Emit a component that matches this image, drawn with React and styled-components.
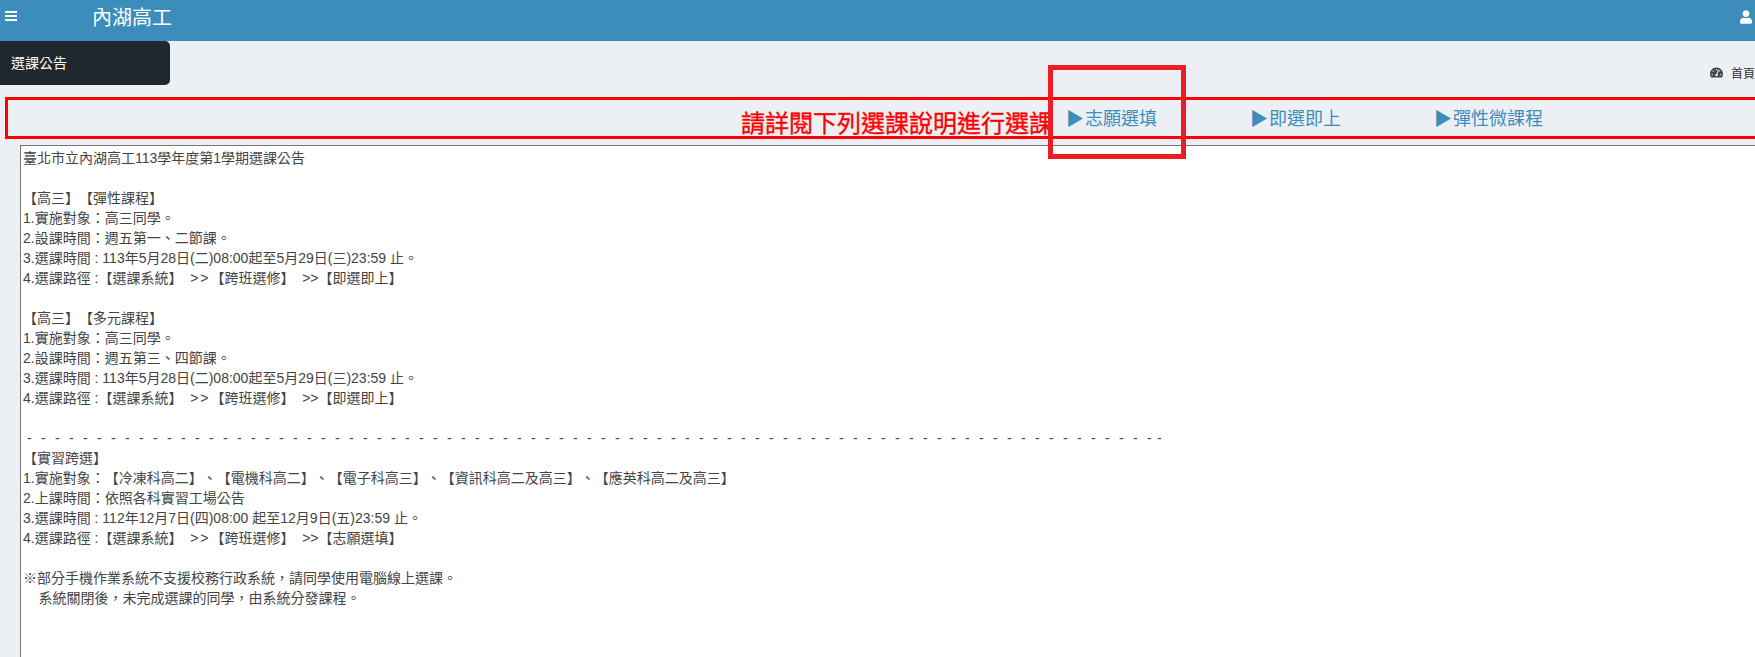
import React from 'react';
import styled, { createGlobalStyle } from 'styled-components';
import { FaUser, FaTachometerAlt } from 'react-icons/fa';

const font = '"Liberation Sans", "Noto Sans CJK TC", sans-serif';

const links = ['志願選填', '即選即上', '彈性微課程'];

const GlobalStyle = createGlobalStyle`
    html, body {
        margin: 0;
        height: 657px;
        overflow: hidden;
        background: #ecf0f5;
        font-family: ${font};
        text-spacing-trim: space-all;
    }
`;

const Page = styled.div`
    position: relative;
    width: 1755px;
    height: 657px;
    overflow: hidden;
`;

const Header = styled.header`
    display: flex;
    align-items: center;
    height: 41px;
    padding: 0 3px 0 5px;
    background: #3c8dbc;
    color: #fff;
`;

const Brand = styled.span`
    margin-left: 75px;
    margin-top: -5px;
    font-size: 20px;
    line-height: 32px;
`;

const Burger = styled.svg`
    width: 12px;
    height: 10px;
    margin-top: -9px;
    fill: #fff;
`;

const UserIcon = styled(FaUser)`
    width: 12px;
    height: 14px;
    margin-left: auto;
    margin-top: -7px;
`;

const TopRow = styled.div`
    display: flex;
    justify-content: space-between;
    height: 56px;
`;

const Tab = styled.div`
    width: 159px;
    height: 44px;
    padding-left: 11px;
    background: #1f282e;
    border-radius: 0 5px 5px 0;
    color: #fff;
    font-size: 14px;
    line-height: 44px;
`;

const Crumb = styled.div`
    display: flex;
    align-items: center;
    gap: 8px;
    height: 20px;
    margin-top: 21px;
    font-size: 12px;
    color: #333;
    white-space: nowrap;
`;

const GaugeIcon = styled(FaTachometerAlt)`
    width: 13px;
    height: 13px;
    color: #444;
`;

const NoticeBar = styled.div`
    display: flex;
    align-items: center;
    box-sizing: border-box;
    width: 1800px;
    height: 42px;
    margin-left: 5px;
    padding-left: 733px;
    border: 3px solid #f00;
`;

const Headline = styled.span`
    width: 325px;
    margin-top: 12px;
    font-size: 24px;
    font-weight: 400;
    line-height: 36px;
    color: #f00;
    -webkit-text-stroke: 0.35px #f00;
    white-space: nowrap;
`;

const NavLink = styled.a`
    width: 184px;
    margin-top: -2px;
    font-size: 18px;
    color: #3c8dbc;
    white-space: nowrap;
`;

const Arrow = styled.span`
    margin-right: 1px;
`;

const NoticeBody = styled.pre`
    box-sizing: border-box;
    width: 1800px;
    height: 530px;
    margin: 6px 0 0 20px;
    padding: 2px;
    border: 1px solid #767676;
    border-width: 1px 0 0 1px;
    background: #fff;
    color: #444;
    font-family: ${font};
    font-size: 14px;
    line-height: 20px;
    white-space: pre;
`;

const Chevrons = styled.span`
    letter-spacing: 1.9px;
`;

const DashRule = styled.span`
    letter-spacing: ${(props) => props.$spacing}px;
`;

const Callout = styled.div`
    position: absolute;
    left: 1048px;
    top: 65px;
    box-sizing: border-box;
    width: 138px;
    height: 94px;
    border: 5px solid #ed1c24;
    pointer-events: none;
`;

const RouteLine = ({ last }) => (
    <>
        4.選課路徑 :【選課系統】{'  '}<Chevrons>{'>>'}</Chevrons>【跨班選修】{'  >>'}【{last}】{'\n'}
    </>
);

const TermBlock = ({ title }) => (
    <>
        【高三】【{title}】{'\n'}
    </>
);

export default function App() {
    return (
        <Page>
            <GlobalStyle />
            <Header>
                <Burger viewBox="0 0 12 10">
                    <rect y="0" width="12" height="2" />
                    <rect y="4" width="12" height="2" />
                    <rect y="8" width="12" height="2" />
                </Burger>
                <Brand>內湖高工</Brand>
                <UserIcon />
            </Header>
            <TopRow>
                <Tab>選課公告</Tab>
                <Crumb>
                    <GaugeIcon />
                    <span>首頁</span>
                </Crumb>
            </TopRow>
            <NoticeBar>
                <Headline>請詳閱下列選課說明進行選課</Headline>
                {links.map((text) => (
                    <NavLink key={text}><Arrow>▶</Arrow>{text}</NavLink>
                ))}
            </NoticeBar>
            <NoticeBody>
                {'臺北市立內湖高工113學年度第1學期選課公告\n\n'}
                <TermBlock title="彈性課程" />
                {'1.實施對象：高三同學。\n2.設課時間：週五第一、二節課。\n3.選課時間 : 113年5月28日(二)08:00起至5月29日(三)23:59 止。\n'}
                <RouteLine last="即選即上" />
                {'\n'}
                <TermBlock title="多元課程" />
                {'1.實施對象：高三同學。\n2.設課時間：週五第三、四節課。\n3.選課時間 : 113年5月28日(二)08:00起至5月29日(三)23:59 止。\n'}
                <RouteLine last="即選即上" />
                {'\n '}
                <DashRule $spacing={9.34}>{'-'.repeat(80)}</DashRule>
                <DashRule $spacing={5.34}>-</DashRule>
                {'-\n【實習跨選】\n1.實施對象：【冷凍科高二】、【電機科高二】、【電子科高三】、【資訊科高二及高三】、【應英科高二及高三】\n2.上課時間：依照各科實習工場公告\n3.選課時間 : 112年12月7日(四)08:00 起至12月9日(五)23:59 止。\n'}
                <RouteLine last="志願選填" />
                {'\n※部分手機作業系統不支援校務行政系統，請同學使用電腦線上選課。\n    系統關閉後，未完成選課的同學，由系統分發課程。'}
            </NoticeBody>
            <Callout />
        </Page>
    );
}
